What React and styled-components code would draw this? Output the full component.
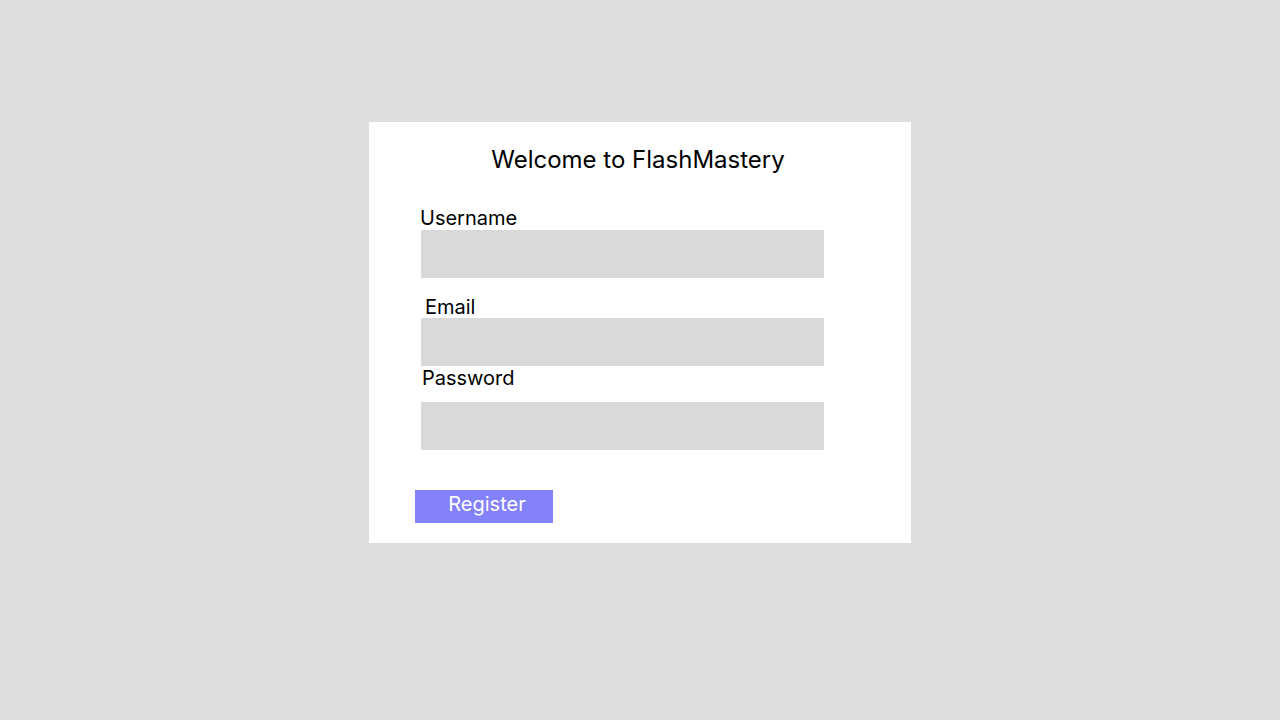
import React from "react";
import styled, { createGlobalStyle } from "styled-components";

const GlobalStyle = createGlobalStyle`
  html, body {
    margin: 0;
    padding: 0;
    background: #dddddd;
    font-family: Inter, "Liberation Sans", sans-serif;
  }
`;

const Page = styled.div`
  min-height: 720px;
  padding-top: 122px;
  box-sizing: border-box;
`;

const Card = styled.div`
  width: 542px;
  height: 421px;
  margin: 0 auto;
  background: #ffffff;
  box-sizing: border-box;
  padding: 23px 0 20px;
  display: flex;
  flex-direction: column;
`;

const Title = styled.h1`
  margin: 0;
  font-size: 24px;
  line-height: 29px;
  font-weight: 400;
  color: #000;
  text-align: center;
  padding-right: 4px;
`;

const Form = styled.form`
  display: flex;
  flex-direction: column;
  padding-left: 52px;
  margin-top: 32px;
`;

const Field = styled.div`
  display: flex;
  flex-direction: column;
  margin-top: ${(p) => p.$top || 0}px;
`;

const Label = styled.label`
  font-size: 20px;
  line-height: 24px;
  color: #000;
  margin-left: ${(p) => p.$indent || 0}px;
  transform: translateY(${(p) => p.$shift || 0}px);
`;

const Input = styled.input`
  width: 403px;
  height: 48px;
  box-sizing: border-box;
  border: none;
  outline: none;
  background: #d9d9d9;
  margin-top: ${(p) => p.$gap || 0}px;
  font-family: inherit;
  font-size: 16px;
  padding: 0 10px;
`;

const Button = styled.button`
  width: 138px;
  height: 33px;
  margin: 40px 0 0 46px;
  border: none;
  background: #8482fb;
  color: #ffffff;
  font-family: inherit;
  font-size: 20px;
  line-height: 24px;
  padding: 0 0 6px 6px;
  cursor: pointer;
`;

const fields = [
  { name: "Username", type: "text", indent: -1, top: 0, gap: 0, shift: 0 },
  { name: "Email", type: "email", indent: 4, top: 16, gap: 0, shift: 1 },
  { name: "Password", type: "password", indent: 1, top: 0, gap: 12, shift: 0 },
];

const App = () => {
  return (
    <Page>
      <GlobalStyle />
      <Card>
        <Title>Welcome to FlashMastery</Title>
        <Form onSubmit={(e) => e.preventDefault()}>
          {fields.map((f) => (
            <Field key={f.name} $top={f.top}>
              <Label $indent={f.indent} $shift={f.shift}>
                {f.name}
              </Label>
              <Input type={f.type} $gap={f.gap} />
            </Field>
          ))}
        </Form>
        <Button type="button">Register</Button>
      </Card>
    </Page>
  );
};

export default App;
